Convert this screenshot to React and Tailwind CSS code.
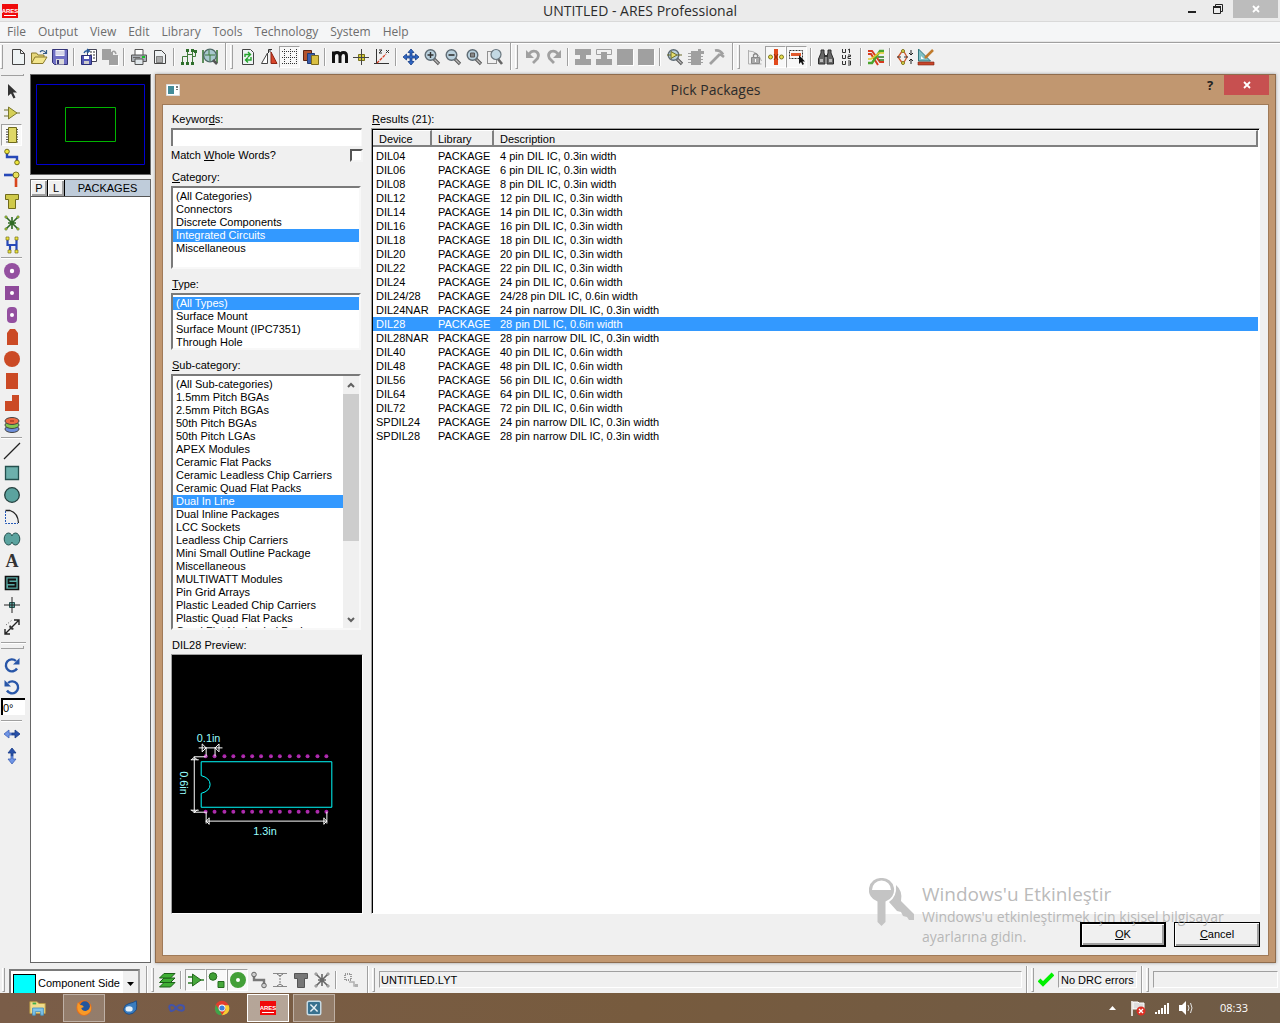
import React, { useState } from "react";

const menus = ["File", "Output", "View", "Edit", "Library", "Tools", "Technology", "System", "Help"];

const topBands = [
  ["new", "open", "save", "|", "importRegion", "exportRegion", "|", "print", "printArea", "|", "netlist", "netSearch"],
  ["redraw", "flip", "grid*", "layersSet", "|", "metric", "origin", "polar", "|", "pan", "zoomIn", "zoomOut", "zoomAll", "zoomArea"],
  ["undo", "redo", "|", "blockCopy", "blockMove", "block", "block", "|", "pick", "makePackage", "decompose"],
  ["lock", "trackAngle*", "select*", "|", "find", "annotate", "|", "router", "|", "drc", "design"],
];

const sideTools = [
  ["cursor", "gate", "chip*", "track", "via", "zone", "rats", "connectivity"],
  ["padRound", "padSquare", "padDil", "padEdge", "padCircle", "padRect", "padPoly", "padStack"],
  ["line", "box", "circle", "arc", "path", "text", "symbol", "marker", "dimension"],
];

const filterTools = ["layerStack", "|", "gateGreen*", "shapes*", "ringGreen*", "trackGrey", "viaGrey", "zoneGrey", "ratsGrey", "|", "partial"];

const categories = [
  "(All Categories)",
  "Connectors",
  "Discrete Components",
  "Integrated Circuits",
  "Miscellaneous",
];

const types = ["(All Types)", "Surface Mount", "Surface Mount (IPC7351)", "Through Hole"];

const subCategories = [
  "(All Sub-categories)",
  "1.5mm Pitch BGAs",
  "2.5mm Pitch BGAs",
  "50th Pitch BGAs",
  "50th Pitch LGAs",
  "APEX Modules",
  "Ceramic Flat Packs",
  "Ceramic Leadless Chip Carriers",
  "Ceramic Quad Flat Packs",
  "Dual In Line",
  "Dual Inline Packages",
  "LCC Sockets",
  "Leadless Chip Carriers",
  "Mini Small Outline Package",
  "Miscellaneous",
  "MULTIWATT Modules",
  "Pin Grid Arrays",
  "Plastic Leaded Chip Carriers",
  "Plastic Quad Flat Packs",
  "Quad Flat No-leaded Packages",
];

const results = [
  ["DIL04", "4 pin DIL IC, 0.3in width"],
  ["DIL06", "6 pin DIL IC, 0.3in width"],
  ["DIL08", "8 pin DIL IC, 0.3in width"],
  ["DIL12", "12 pin DIL IC, 0.3in width"],
  ["DIL14", "14 pin DIL IC, 0.3in width"],
  ["DIL16", "16 pin DIL IC, 0.3in width"],
  ["DIL18", "18 pin DIL IC, 0.3in width"],
  ["DIL20", "20 pin DIL IC, 0.3in width"],
  ["DIL22", "22 pin DIL IC, 0.3in width"],
  ["DIL24", "24 pin DIL IC, 0.6in width"],
  ["DIL24/28", "24/28 pin DIL IC, 0.6in width"],
  ["DIL24NAR", "24 pin narrow DIL IC, 0.3in width"],
  ["DIL28", "28 pin DIL IC, 0.6in width"],
  ["DIL28NAR", "28 pin narrow DIL IC, 0.3in width"],
  ["DIL40", "40 pin DIL IC, 0.6in width"],
  ["DIL48", "48 pin DIL IC, 0.6in width"],
  ["DIL56", "56 pin DIL IC, 0.6in width"],
  ["DIL64", "64 pin DIL IC, 0.6in width"],
  ["DIL72", "72 pin DIL IC, 0.6in width"],
  ["SPDIL24", "24 pin narrow DIL IC, 0.3in width"],
  ["SPDIL28", "28 pin narrow DIL IC, 0.3in width"],
];

const lens = (mark) => (
  <>
    <path d="M11 11l5 5" stroke="#555" strokeWidth="3.2" />
    <path d="M11.5 11.5l4 4" stroke="#bbb" strokeWidth="1.2" />
    <circle cx="7.5" cy="7" r="5.3" fill="#b9d0dd" stroke="#5f6c75" strokeWidth="1.4" />
    {mark}
  </>
);

const track = (line, dot, edge) => (
  <>
    <path d="M4 4v5h10v6" fill="none" stroke={line} strokeWidth="2.4" />
    <circle cx="4" cy="3.5" r="2.3" fill={dot} stroke={edge} />
    <circle cx="14" cy="14.5" r="2.3" fill={dot} stroke={edge} />
  </>
);

const rats = (line, dot) => (
  <>
    <path d="M3 3l12 12M15 3L3 15M9 3v12M5 9h8" stroke={line} strokeWidth="1.6" />
    <path d="M2 2h2v2h-2zM14 2h2v2h-2zM2 14h2v2h-2zM14 14h2v2h-2z" fill={dot} stroke={line} strokeWidth=".6" />
  </>
);

const tee = (fill, edge) => <path d="M2.5 2.5h13v5h-3v9h-7v-9h-3z" fill={fill} stroke={edge} />;

// All drawings share an 18 x 18 box
const icons = {
  new: <path d="M3.5 1.5h8l4 4v11h-12zM11.500 1.500v4h4" fill="#eef3f4" stroke="#444" />,
  open: (
    <>
      <path d="M1.5 15V5h5l1.5 2h6v3" fill="#e7d87c" stroke="#8a7a2c" />
      <path d="M1.5 15.500L5 9h12l-4 6.500z" fill="#f2e58c" stroke="#8a7a2c" />
      <path d="M10 4q3-3 6 1M16.5 2v3.500h-3.500" fill="none" stroke="#345c88" strokeWidth="1.2" />
    </>
  ),
  save: (
    <>
      <path d="M1.5 1.500h15v15h-13l-2-2z" fill="#6f6fc4" stroke="#343478" />
      <path d="M4.500 2h9v6h-9z" fill="#f4f4fb" />
      <path d="M5 11h8v5.500H5z" fill="#d9d9d9" />
      <path d="M6 12h2v4h-2z" fill="#343478" />
      <path d="M5 4h8M5 6h8" stroke="#b6b6d6" />
    </>
  ),
  importRegion: (
    <>
      <path d="M7.500 1.500h9v12h-9z" fill="#fff" stroke="#445" />
      <path d="M10 4h5M10 7h5M10 10h5" stroke="#777" strokeWidth="1.5" strokeDasharray="2 1" />
      <path d="M1.500 7.500h10v9h-10z" fill="#5257b5" stroke="#2a2e78" />
      <path d="M4 8h5v3H4z" fill="#fff" />
      <path d="M4 13h5v3H4z" fill="#ccc" />
      <path d="M4 5q1-3 5-2M7 1l2.500 2L7 5" fill="none" stroke="#275a9c" strokeWidth="1.3" />
    </>
  ),
  exportRegion: (
    <>
      <path d="M1 1h9v3h2v3h5v10H8v-5H1z" fill="#a0a0a0" />
      <path d="M11 4q3-2 4 2" fill="none" stroke="#a0a0a0" strokeWidth="1.5" />
      <path d="M17.500 8v9.500H9" fill="none" stroke="#fff" />
    </>
  ),
  print: (
    <>
      <path d="M5 7V1.500h8V7" fill="#fff" stroke="#555" />
      <path d="M1.500 7h15v6.500h-15z" fill="#a9adb2" stroke="#555" />
      <path d="M5 11h8v5.500H5z" fill="#dfe6ea" stroke="#555" />
      <path d="M12 8h3v2h-3z" fill="#15c02a" />
      <path d="M3 9.500h7" stroke="#666" />
    </>
  ),
  printArea: (
    <>
      <path d="M3.500 2.500h7l4 4v9h-11z" fill="#eef1f2" stroke="#444" />
      <path d="M5.500 8.500h6v6h-6z" fill="#aaa" stroke="#333" strokeDasharray="1 1" />
    </>
  ),
  netlist: (
    <>
      <path d="M2.500 15V8.500h5M7.500 2v14M7.500 6.500h5M12.500 2v14M12.500 8.500h3V3" fill="none" stroke="#3f7a3a" />
      <path d="M1 14h3v3H1zM6 1h3v3H6zM11 1h3v3h-3zM6 14h3v3H6zM11 14h3v3h-3zM14 2h3v3h-3z" fill="#2f6f2c" />
    </>
  ),
  netSearch: (
    <>
      <path d="M2 2v13M16 2v13" stroke="#2f6f2c" strokeWidth="1.5" />
      <circle cx="9" cy="7.500" r="6.3" fill="#a9c9cf" stroke="#4f6a66" strokeWidth="1.3" />
      <path d="M4 7h4V2M8 7h6M9 7v6" fill="none" stroke="#3f7a3a" />
      <path d="M12 12l4 4" stroke="#555" strokeWidth="2.5" />
    </>
  ),
  redraw: (
    <>
      <path d="M3.500 1.500h8l3 3v12h-11z" fill="#eef3f4" stroke="#444" />
      <path d="M6 9V6.500h5M9 4l2.500 2.500L9 9M12 9v3H7M9 9.500L6.500 12 9 14.500" fill="none" stroke="#25a52c" strokeWidth="1.4" />
    </>
  ),
  flip: (
    <>
      <path d="M1.500 15.500h6V5z" fill="#fff" stroke="#444" />
      <path d="M11 4v11.500h6z" fill="#d8452a" stroke="#8e2412" />
      <path d="M8.500 5V1.500H12M8.500 3H11" fill="none" stroke="#333" />
    </>
  ),
  grid: <path d="M1 3.500h16M1 9.500h16M1 15.500h16M3.500 1v16M9.500 1v16M15.500 1v16" stroke="#333" strokeDasharray="1 1" />,
  layersSet: (
    <>
      <path d="M1.500 2.500h8v10h-8z" fill="#b4522c" stroke="#5d2412" />
      <path d="M5.500 5.500h7v10h-7z" fill="#3c5fae" stroke="#233a70" />
      <path d="M9.500 7.500h7v9h-7z" fill="#d9bf42" stroke="#7c6a1c" />
    </>
  ),
  metric: <path d="M2.500 15V3.500M2.500 7.500Q3 4.500 6 4.500T9 8v7M9 8q.5-3.500 3.500-3.500T15.500 8v7" fill="none" stroke="#111" strokeWidth="3" />,
  origin: (
    <>
      <path d="M9.500 1v16M1 9.500h16" stroke="#444" />
      <path d="M6.500 6.500h6v6h-6z" fill="#d6cd3a" stroke="#77701a" />
      <path d="M9.500 5v9M5 9.500h9" stroke="#444" />
    </>
  ),
  polar: (
    <>
      <path d="M3.500 1v15M1 15.500h15" stroke="#333" />
      <path d="M4 15L13 6" stroke="#d33a20" strokeDasharray="3 1" strokeWidth="1.3" />
      <path d="M6 2h3L6 5h3M13 2l3 3M16 2l-3 3" fill="none" stroke="#333" />
    </>
  ),
  pan: <path d="M9 1l3 3.500h-2V8h3.500V6L17 9l-3.500 3v-2H10v3.500h2L9 17l-3-3.500h2V10H4.500v2L1 9l3.500-3v2H8V4.500H6z" fill="#2f66c4" stroke="#173e86" strokeWidth=".8" />,
  zoomIn: lens(<path d="M7.500 4v6M4.500 7h6" stroke="#333" strokeWidth="1.4" />),
  zoomOut: lens(<path d="M4.500 7h6" stroke="#333" strokeWidth="1.6" />),
  zoomAll: lens(<path d="M5.500 5h4v4h-4z" fill="#888" stroke="#555" />),
  zoomArea: (
    <>
      <path d="M1.500 3.500h9v12h-9z" fill="none" stroke="#333" strokeDasharray="1 1" />
      <path d="M12 11l4 5" stroke="#666" strokeWidth="2.6" />
      <circle cx="10" cy="6.500" r="5" fill="#c3d9e4" stroke="#6b7880" strokeWidth="1.2" />
    </>
  ),
  undo: (
    <>
      <path d="M5 6q3-4 7-2.500 4 2.500 1.500 7L9 15" fill="none" stroke="#a0a0a0" strokeWidth="2.8" />
      <path d="M2 2v8h8z" fill="#a0a0a0" />
    </>
  ),
  redo: (
    <>
      <path d="M13 6Q10 2 6 3.500q-4 2.500-1.500 7L9 15" fill="none" stroke="#a0a0a0" strokeWidth="2.8" />
      <path d="M16 2v8H8z" fill="#a0a0a0" />
    </>
  ),
  blockCopy: <path d="M1 1h16v6h-5v4h5v6H1v-6h5V7H1z" fill="#a0a0a0" />,
  blockMove: (
    <>
      <path d="M1.500 1.500h15v5h-15z" fill="#f0f0f0" stroke="#a0a0a0" />
      <path d="M6 4h6v7h5v6H1v-6h5z" fill="#a0a0a0" />
    </>
  ),
  block: (
    <>
      <path d="M2 2h16v16H2z" fill="#fff" />
      <path d="M1 1h16v16H1z" fill="#a0a0a0" />
    </>
  ),
  pick: lens(<path d="M5 3.500v7L11 7zM1 7h4M11 7h5" fill="#e3dd6c" stroke="#6a6a2a" />),
  makePackage: (
    <>
      <path d="M4 3h7v-2h3v2h3v3h-3v11H4z" fill="#a0a0a0" />
      <path d="M1 5.500h15M1 8.500h15M1 11.500h15M1 14.500h15" stroke="#a0a0a0" />
    </>
  ),
  decompose: <path d="M2 16L12 6M7 2.500q5-1 8 4M12 6l4 3" fill="none" stroke="#a0a0a0" strokeWidth="2.8" />,
  lock: (
    <>
      <path d="M2.500 2v14h13M2.500 3Q12 3 15.500 13" fill="none" stroke="#b0b0b0" />
      <path d="M5.500 9.500h8v6h-8z" fill="#aaa" stroke="#888" />
      <path d="M7.500 9V7q2-2.500 4 0v2" fill="none" stroke="#888" strokeWidth="1.3" />
      <path d="M9 11h1v3h-1z" fill="#fff" />
    </>
  ),
  trackAngle: (
    <>
      <path d="M7 1h4v16H7z" fill="#e24a1c" />
      <path d="M7 6l4 6M7 12l4-6" stroke="#8e2a0c" />
      <circle cx="3.500" cy="9" r="2" fill="#e8e04a" stroke="#7d7720" />
      <circle cx="14.500" cy="9" r="2" fill="#e8e04a" stroke="#7d7720" />
    </>
  ),
  select: (
    <>
      <path d="M1.500 2.500h13v8h-13z" fill="none" stroke="#333" strokeDasharray="2 1" />
      <path d="M3 5h10v3H3z" fill="#e0582c" />
      <path d="M11 7v9l2-2 1.500 3 1.500-1-1.500-2.500H17z" fill="#111" />
    </>
  ),
  find: (
    <>
      <path d="M4 2h3v3l1 3v8H1.500v-5L4 5zM11 2h3v3l2.500 6v5H10V8l1-3z" fill="#666" stroke="#2c2c2c" />
      <path d="M3 11h3v3H3zM12 11h3v3h-3z" fill="#bbb" />
      <path d="M7 8h4" stroke="#333" strokeWidth="2" />
    </>
  ),
  annotate: (
    <path
      d="M4.500 1v3.500h3V1M10 2l1.500-1v4M4.500 7v3.500h3V7M10 7h2.500v1.500H10v2h3M4.500 13v3.500h3V13M10 13h2.500v4H10M10 15h2.500"
      fill="none"
      stroke="#333"
    />
  ),
  router: (
    <>
      <path d="M1 3h4l8 11h4M1 6h3l7 11" fill="none" stroke="#d63b1f" strokeWidth="2" />
      <path d="M1 15h4L13 3h4" fill="none" stroke="#4aa52c" strokeWidth="2.4" />
      <path d="M1 11h3l8-6h5" fill="none" stroke="#ddc92c" strokeWidth="1.6" />
      <path d="M11 9h6M12 12h5" stroke="#2a7a1c" strokeWidth="1.5" />
    </>
  ),
  drc: (
    <>
      <path d="M7 2l-5 7 5 7M7 2l4 7-4 7" fill="none" stroke="#d0582c" strokeWidth="1.3" />
      <path d="M1 9h4M8 9h4" stroke="#333" />
      <circle cx="7" cy="3" r="1.5" fill="#e8e04a" stroke="#7d7720" />
      <circle cx="7" cy="15" r="1.5" fill="#e8e04a" stroke="#7d7720" />
      <path d="M15 2v5M13 5l2 2 2-2M15 16v-5M13 13l2-2 2 2" fill="none" stroke="#222" />
    </>
  ),
  design: (
    <>
      <path d="M1.500 1v12h12z" fill="#7fc1c6" stroke="#33767c" />
      <path d="M4 8v3h3z" fill="#fff" />
      <path d="M8 10l8-8" stroke="#c07a2c" strokeWidth="2.5" />
      <path d="M1 14h16v3H1z" fill="#c8452a" stroke="#7c2412" strokeWidth=".6" />
    </>
  ),
  cursor: <path d="M5 2v12l3-2.500 2.500 5 2-1-2.500-5h4z" fill="#333" />,
  gate: (
    <>
      <path d="M1 6h5M1 12h5M13 9h4" stroke="#6f7030" />
      <path d="M5.500 3v12L14 9z" fill="#d5d057" stroke="#7d7a2c" />
    </>
  ),
  chip: (
    <>
      <path d="M3 3.500h12M3 6h12M3 8.500h12M3 11h12M3 13.500h12M3 16h12" stroke="#555" />
      <path d="M5.500 1.500h8v15h-8z" fill="#dfd866" stroke="#6f6a1c" />
    </>
  ),
  track: track("#2648b8", "#ede53c", "#76701c"),
  via: (
    <>
      <path d="M1 5h10" stroke="#2648b8" strokeWidth="2.6" />
      <path d="M13 6v11" stroke="#d8451c" strokeWidth="2.6" />
      <circle cx="13" cy="5" r="3" fill="#e8e05a" stroke="#7d7720" />
    </>
  ),
  zone: tee("#cfc94a", "#6f6a1c"),
  rats: rats("#2f6a24", "#ede53c"),
  connectivity: (
    <>
      <path d="M4.500 3v6h9M13.500 3v12M7 9v6" fill="none" stroke="#2648b8" strokeWidth="2.2" />
      <path d="M3 1h3v3h-3zM12 1h3v3h-3zM5 14h3v3h-3zM12 14h3v3h-3z" fill="#ede53c" stroke="#76701c" strokeWidth=".7" />
    </>
  ),
  padRound: (
    <>
      <circle cx="9" cy="9" r="8" fill="#9450a0" />
      <circle cx="9" cy="9" r="2.2" fill="#fff" />
    </>
  ),
  padSquare: (
    <>
      <path d="M2 2h14v14H2z" fill="#8f4a9b" />
      <circle cx="9" cy="9" r="2" fill="#fff" />
    </>
  ),
  padDil: (
    <>
      <rect x="4" y="1" width="10" height="16" rx="4" fill="#9450a0" />
      <circle cx="9" cy="9" r="2" fill="#fff" />
    </>
  ),
  padEdge: <path d="M4 17V5l3-4h5l3 4v12z" fill="#cb4a25" />,
  padCircle: <circle cx="9" cy="9" r="8" fill="#cb4a25" />,
  padRect: <path d="M3 1h12v16H3z" fill="#cb4a25" />,
  padPoly: <path d="M9 1h7v16H2V7h7z" fill="#cb4a25" />,
  padStack: (
    <>
      <ellipse cx="9" cy="13" rx="7" ry="3.5" fill="#6d8fdc" stroke="#444" />
      <ellipse cx="9" cy="9" rx="7" ry="3.5" fill="#84c850" stroke="#444" />
      <ellipse cx="9" cy="5" rx="7" ry="3.5" fill="#ef6a42" stroke="#444" />
      <path d="M7 5h4" stroke="#8e2412" />
    </>
  ),
  line: <path d="M1 17L17 1" stroke="#222" strokeWidth="1.3" />,
  box: <path d="M2.500 2.500h13v13h-13z" fill="#6cb0ac" stroke="#24504e" strokeWidth="1.3" />,
  circle: <circle cx="9" cy="9" r="7.3" fill="#5ba39f" stroke="#24403e" strokeWidth="1.3" />,
  arc: (
    <>
      <path d="M2.500 3v12.500H15" fill="none" stroke="#2458b8" strokeDasharray="2 1" />
      <path d="M2.500 2.500H7Q15 5 15.500 15" fill="none" stroke="#222" strokeWidth="1.3" />
    </>
  ),
  path: (
    <>
      <ellipse cx="5.500" cy="9" rx="4.3" ry="6" fill="#5ba39f" stroke="#24504e" />
      <ellipse cx="12.500" cy="9" rx="4.3" ry="6" fill="#5ba39f" stroke="#24504e" />
      <path d="M7 6h4v6H7z" fill="#5ba39f" />
    </>
  ),
  text: (
    <text x="9" y="15" textAnchor="middle" fontFamily="Liberation Serif, serif" fontWeight="700" fontSize="18" fill="#333">
      A
    </text>
  ),
  symbol: (
    <>
      <path d="M2.500 2.500h13v13h-13z" fill="#58aaa6" stroke="#111" strokeWidth="1.6" />
      <path d="M13 5.500H5.500V9h7v3.500H5" fill="none" stroke="#111" strokeWidth="1.8" />
    </>
  ),
  marker: (
    <>
      <path d="M9 1v16M1 9h16" stroke="#222" />
      <path d="M6.500 6.500h5v5h-5z" fill="#5ba39f" stroke="#24504e" />
      <path d="M9 6v6M6 9h6" stroke="#222" />
    </>
  ),
  dimension: (
    <>
      <path d="M2 16L16 2M16 7V2h-5M2 11v5h5" fill="none" stroke="#222" strokeWidth="1.4" />
      <path d="M7 7l4 4-2 1-3-3z" fill="#333" />
      <path d="M3 7l6-5" stroke="#555" strokeDasharray="1 2" />
    </>
  ),
  rotateCw: (
    <>
      <path d="M14 12.500A6 6 0 1 1 13 5" fill="none" stroke="#2856a8" strokeWidth="2.4" />
      <path d="M16.500 2v6.500H10z" fill="#2856a8" />
    </>
  ),
  rotateCcw: (
    <>
      <path d="M4 12.500A6 6 0 1 0 5 5" fill="none" stroke="#2856a8" strokeWidth="2.4" />
      <path d="M1.500 2v6.500H8z" fill="#2856a8" />
    </>
  ),
  mirrorX: (
    <>
      <path d="M1 9l5-4v3h3v2H6v3z" fill="#6f95e6" stroke="#3f62b8" strokeWidth=".8" />
      <path d="M17 9l-5-4v3H9v2h3v3z" fill="#2850a8" stroke="#173a86" strokeWidth=".8" />
    </>
  ),
  mirrorY: (
    <>
      <path d="M9 1l4 5h-3v3H8V6H5z" fill="#2850a8" stroke="#173a86" strokeWidth=".8" />
      <path d="M9 17l4-5h-3V9H8v3H5z" fill="#6f95e6" stroke="#3f62b8" strokeWidth=".8" />
    </>
  ),
  layerStack: (
    <g fill="#3fae34" stroke="#1c5f18">
      <path d="M6 11.500h11l-4.500 4.500H1.500z" />
      <path d="M6 7h11l-4.500 4.500H1.500z" />
      <path d="M6 2.500h11L12.500 7H1.500z" />
    </g>
  ),
  gateGreen: (
    <>
      <path d="M1 6h5M1 12h5M13 9h4" stroke="#2a7a24" strokeWidth="1.3" />
      <path d="M5.500 3v12L14 9z" fill="#46a83a" stroke="#256a1e" />
    </>
  ),
  shapes: (
    <>
      <circle cx="5" cy="5.500" r="3.8" fill="#3f9f34" stroke="#256a1e" />
      <path d="M10 10.500h6v6h-6z" fill="#46a83a" stroke="#256a1e" />
    </>
  ),
  ringGreen: <circle cx="9" cy="9" r="5" fill="#fff" stroke="#43a038" strokeWidth="6" />,
  trackGrey: track("#777", "#ccc", "#666"),
  viaGrey: (
    <>
      <path d="M2 2.500h14M2 15.500h14" stroke="#888" />
      <path d="M9 4v10" stroke="#777" strokeDasharray="2 1" />
      <path d="M6 3l3 2 3-2M6 15l3-2 3 2" fill="none" stroke="#777" />
    </>
  ),
  zoneGrey: tee("#777", "#555"),
  ratsGrey: rats("#666", "#ddd"),
  partial: (
    <>
      <path d="M3 3h6v6H3z" fill="none" stroke="#999" strokeDasharray="1 1" strokeWidth="2" />
      <path d="M7 11h5v4h3" fill="none" stroke="#b0b0b0" strokeWidth="1.5" />
      <path d="M13 13h3v3h-3z" fill="#b0b0b0" />
    </>
  ),
};

function Glyph({ name }) {
  return (
    <svg width="18" height="18" viewBox="0 0 18 18" aria-hidden="true">
      {icons[name]}
    </svg>
  );
}

function Tool({ id }) {
  const pressed = id.endsWith("*");
  const name = id.replace("*", "");
  return (
    <button
      type="button"
      aria-label={name}
      aria-pressed={pressed}
      className={`flex h-[22px] w-[21px] shrink-0 items-center justify-center border ${
        pressed ? "border-t-[#a0a0a0] border-l-[#a0a0a0] border-r-white border-b-white bg-[#f8f8f8]" : "border-transparent"
      }`}
    >
      <Glyph name={name} />
    </button>
  );
}

function Divider() {
  return (
    <div className="flex w-2 shrink-0 items-center justify-center">
      <div className="h-[18px] w-[2px] border-r border-l border-r-white border-l-[#a0a0a0]" />
    </div>
  );
}

function Grip() {
  return <div className="h-6 w-[3px] shrink-0 border-r border-b border-l border-r-[#a0a0a0] border-b-[#a0a0a0] border-l-white" />;
}

function BandEnd() {
  return <div className="w-[2px] shrink-0 self-stretch border-r border-l border-r-white border-l-[#a0a0a0]" />;
}

function ToolRow({ items }) {
  return items.map((id, i) => (id === "|" ? <Divider key={i} /> : <Tool key={i} id={id} />));
}

function AresLogo() {
  return (
    <svg width="16" height="14" viewBox="0 0 16 14" aria-hidden="true">
      <rect width="16" height="14" fill="#f00a0a" />
      <text
        x="8"
        y="9"
        textAnchor="middle"
        fontFamily="Liberation Sans Narrow, Liberation Sans, sans-serif"
        fontWeight="700"
        fontSize="6"
        fill="#fff"
      >
        ARES
      </text>
      <path d="M2 11.500h12" stroke="#fff" />
    </svg>
  );
}

function Label({ hotkey, rest, before = "", htmlFor, id }) {
  return (
    <label htmlFor={htmlFor} id={id} className="flex h-[18px] shrink-0 items-center px-px whitespace-pre">
      <span>
        {before}
        <u>{hotkey}</u>
        {rest}
      </span>
    </label>
  );
}

function ListBox({ labelId, items, initial, className, scroll }) {
  const [selected, setSelected] = useState(initial);

  return (
    <div
      className={`mr-[2px] flex shrink-0 overflow-hidden border-2 border-t-[#7a7a7a] border-l-[#7a7a7a] border-r-[#f8f8f8] border-b-[#f8f8f8] bg-white ${className}`}
    >
      <ul role="listbox" aria-labelledby={labelId} className="min-w-0 flex-1 pt-[2px]">
        {items.map((item, i) => (
          <li
            key={item}
            role="option"
            aria-selected={i === selected}
            onClick={() => setSelected(i)}
            className={`h-[13px] pl-[3px] leading-[13px] whitespace-nowrap ${
              i === selected ? "bg-[#3399ff] text-white" : ""
            }`}
          >
            {item}
          </li>
        ))}
      </ul>
      {scroll && (
        <div className="flex w-4 shrink-0 flex-col bg-[#f0f0f0] text-[#606060]">
          <button type="button" aria-label="Scroll up" className="flex h-[18px] items-center justify-center">
            <svg width="8" height="6" viewBox="0 0 8 6">
              <path d="M1 5l3-3 3 3" fill="none" stroke="currentColor" strokeWidth="2" />
            </svg>
          </button>
          <div className="h-[147px] bg-[#cdcdcd]" />
          <button type="button" aria-label="Scroll down" className="mt-auto flex h-[17px] items-center justify-center">
            <svg width="8" height="6" viewBox="0 0 8 6">
              <path d="M1 1l3 3 3-3" fill="none" stroke="currentColor" strokeWidth="2" />
            </svg>
          </button>
        </div>
      )}
    </div>
  );
}

function PackagePreview() {
  const pins = Array.from({ length: 14 }, (_, i) => Math.round(35 + i * 9.4));
  return (
    <svg width="192" height="258" viewBox="1 0 192 258" role="img" aria-label="DIL28 package outline">
      <path d="M30.500 120.500V106.500H162.500V152.500H30.500V138.500Q39.500 136 39.500 129.500T30.500 120.500" fill="none" stroke="#00ffff" />
      {pins.map((x) => (
        <g key={x} fill="#b020b0">
          <circle cx={x} cy="101" r="2" />
          <circle cx={x} cy="157" r="2" />
          <path d={`M${x} 101h1v1h-1zM${x} 157h1v1h-1z`} fill="#888" />
        </g>
      ))}
      <g fill="none" stroke="#fff">
        <path d="M23.500 102v56M23 101.500h12M23 157.500h12M20 104.500h8M23.500 102l-3 2.500M23.500 102l3 2.500M20 155.500h8M23.500 158l-3-3M23.500 158l3-3" />
        <path d="M35.500 157v12M157.500 157v12M35 166.500h122M38.500 163v7M35.500 166.500l3-3M35.500 166.500l3 3M154.500 163v7M157.500 166.500l-3-3M157.500 166.500l-3 3" />
        <path d="M28 92.500h24M35.500 92v9M44.500 92v9M35.500 92.500l-4-4v8zM44.500 92.500l4-4v8z" />
      </g>
      <g fill="#9ff" fontFamily="Liberation Sans, sans-serif" fontSize="11" textAnchor="middle">
        <text x="38" y="87">0.1in</text>
        <text x="95" y="181">1.3in</text>
        <text transform="translate(9 128) rotate(90)">0.6in</text>
      </g>
    </svg>
  );
}

function ResultsTable() {
  const [selected, setSelected] = useState("DIL28");
  const headCell =
    "h-[17px] border-t border-r-2 border-b-2 border-t-white border-r-[#808080] border-b-[#808080] bg-[#f0f0f0] pl-[6px] text-left leading-4";

  return (
    <div className="flex-1 border border-t-[#a0a0a0] border-l-[#a0a0a0] border-r-white border-b-white bg-white pt-px pr-px pl-px shadow-[inset_1px_1px_0_#000]">
      <table aria-labelledby="results-label" className="w-full table-fixed border-separate border-spacing-0">
        <thead>
          <tr>
            <th className="w-[59px] p-0 pb-[2px] font-normal">
              <div className={headCell}>Device</div>
            </th>
            <th className="w-[62px] p-0 pb-[2px] font-normal">
              <div className={headCell}>Library</div>
            </th>
            <th className="p-0 pb-[2px] font-normal">
              <div className={headCell}>Description</div>
            </th>
          </tr>
        </thead>
        <tbody>
          {results.map(([device, description]) => (
            <tr
              key={device}
              onClick={() => setSelected(device)}
              className={device === selected ? "bg-[#3399ff] text-white" : ""}
            >
              <td className="h-[14px] p-0 pl-[3px] leading-[14px] whitespace-nowrap">{device}</td>
              <td className="h-[14px] p-0 pl-[6px] leading-[14px]">PACKAGE</td>
              <td className="h-[14px] p-0 pl-[6px] leading-[14px]">{description}</td>
            </tr>
          ))}
        </tbody>
      </table>
    </div>
  );
}

function ActivationNotice() {
  return (
    <div className="pointer-events-none absolute right-[36px] bottom-2 flex gap-[7px] font-['Open_Sans',sans-serif] text-[#a8a8a8]/80">
      <svg width="46" height="50" viewBox="0 0 46 50" className="shrink-0 text-[#c4c4c4]" aria-hidden="true">
        <path
          fillRule="evenodd"
          d="M12.500 0a12 12 0 0 1 4 23.500V44l-4 4-4-4V23.500A12 12 0 0 1 12.500 0zM12.500 2.500a9.500 9.500 0 0 0-9.500 9.500h19a9.500 9.500 0 0 0-9.500-9.500z"
          fill="currentColor"
        />
        <path d="M27 7q7 6 5 16l13 13v6h-5l-2-3-4-1-2-4-4-1-8-9q8-5 7-17z" fill="currentColor" />
      </svg>
      <div className="w-[310px]">
        <p className="h-7 text-[19px] leading-8">Windows&apos;u Etkinleştir</p>
        <p className="pt-[1px] text-[14px] leading-5">
          Windows&apos;u etkinleştirmek için kişisel bilgisayar
          <br />
          ayarlarına gidin.
        </p>
      </div>
    </div>
  );
}

function PickPackagesDialog() {
  const button =
    "h-[25px] w-[86px] border-black bg-[#f0f0f0] shadow-[inset_1px_1px_0_#fff,inset_-2px_-2px_0_#a0a0a0]";

  return (
    <section
      role="dialog"
      aria-labelledby="dialog-title"
      className="flex min-w-0 flex-1 flex-col border border-[#8f6c4d] bg-[#c19770] px-[6px] pb-[6px] shadow-[0_0_3px_#999]"
    >
      <header className="grid h-[29px] grid-cols-[1fr_auto_1fr] items-center font-['Open_Sans',sans-serif]">
        <svg width="14" height="12" viewBox="0 0 14 12" className="ml-1" aria-hidden="true">
          <path d="M.5.500h13v11H.5z" fill="#fff" stroke="#ddd" />
          <path d="M2 2h6v8H2z" fill="#438c99" />
          <path d="M10 2h2v2h-2zM10 5h2v1h-2z" fill="#777" />
        </svg>
        <h1 id="dialog-title" className="text-[14px] text-[#2b2b2b]">
          Pick Packages
        </h1>
        <div className="flex items-center justify-end self-start">
          <button type="button" aria-label="Help" className="h-5 w-7 text-[13px] leading-5 font-bold text-[#222]">
            ?
          </button>
          <button type="button" aria-label="Close dialog" className="flex h-5 w-[45px] items-center justify-center bg-[#c75050]">
            <svg width="8" height="8" viewBox="0 0 8 8">
              <path d="M1 1l6 6M7 1L1 7" stroke="#fff" strokeWidth="1.8" />
            </svg>
          </button>
        </div>
      </header>

      <div className="relative flex flex-1 flex-col border border-[#a07a58] bg-[#f0f0f0] px-2 pt-[5px] pb-2">
        <div className="flex flex-1 gap-2">
          <div className="flex w-[192px] shrink-0 flex-col">
            <Label before="Keywor" hotkey="d" rest="s:" htmlFor="keywords" />
            <input
              id="keywords"
              className="mr-px h-[18px] w-[191px] border-t-2 border-r border-l-2 border-t-[#7a7a7a] border-r-[#f8f8f8] border-l-[#7a7a7a] bg-white px-1 outline-none"
            />
            <div className="flex h-[18px] items-center justify-between">
              <label htmlFor="whole-words">
                Match <u>W</u>hole Words?
              </label>
              <input
                id="whole-words"
                type="checkbox"
                className="h-[13px] w-[13px] appearance-none border-2 border-t-[#555] border-r-[#f4f4f4] border-b-[#f4f4f4] border-l-[#555] bg-white checked:bg-[#555]"
              />
            </div>

            <div className="mt-1 flex flex-col">
              <Label hotkey="C" rest="ategory:" id="category-label" />
              <ListBox labelId="category-label" items={categories} initial={3} className="h-[83px]" />
            </div>
            <div className="mt-1.5 flex flex-col">
              <Label hotkey="T" rest="ype:" id="type-label" />
              <ListBox labelId="type-label" items={types} initial={0} className="h-[57px]" />
            </div>
            <div className="mt-1.5 flex flex-col">
              <Label hotkey="S" rest="ub-category:" id="sub-label" />
              <ListBox labelId="sub-label" items={subCategories} initial={9} className="h-[256px]" scroll />
            </div>

            <p className="mt-1.5 h-[18px] shrink-0 px-px leading-[18px]">DIL28 Preview:</p>
            <div className="flex flex-1 items-center justify-center border border-t-[#a0a0a0] border-r-white border-b-white border-l-[#a0a0a0] bg-black">
              <PackagePreview />
            </div>
          </div>

          <div className="flex min-w-0 flex-1 flex-col">
            <Label hotkey="R" rest="esults (21):" id="results-label" />
            <ResultsTable />
          </div>
        </div>

        <ActivationNotice />
        <footer className="flex justify-end gap-2 pt-2">
          <button type="button" className={`border-2 ${button}`}>
            <u>O</u>K
          </button>
          <button type="button" className={`border ${button}`}>
            <u>C</u>ancel
          </button>
        </footer>
      </div>
    </section>
  );
}

function SideDivider() {
  return <div className="my-[1px] h-[2px] w-[21px] border-t border-b border-t-[#a0a0a0] border-b-white" />;
}

function SideToolbar() {
  return (
    <nav aria-label="Modes" className="flex w-[30px] shrink-0 flex-col items-start pl-px">
      <div className="mb-[4px] h-[2px] w-[23px] border-r border-b border-[#a0a0a0]" />
      {sideTools.map((group, i) => (
        <React.Fragment key={i}>
          {i > 0 && <SideDivider />}
          {group.map((id) => (
            <Tool key={id} id={id} />
          ))}
        </React.Fragment>
      ))}
      <div className="mt-[4px] h-[2px] w-[25px] border-t border-b border-t-[#a0a0a0] border-b-white" />
      <div className="mt-[2px] mb-[5px] h-[3px] w-[23px] border-r border-b border-[#a0a0a0]" />
      <Tool id="rotateCw" />
      <Tool id="rotateCcw" />
      <input
        aria-label="Rotation angle"
        defaultValue="0°"
        className="mb-1 h-[17px] w-[24px] border-t-2 border-l-2 border-t-black border-l-black bg-white outline-none"
      />
      <SideDivider />
      <Tool id="mirrorX" />
      <Tool id="mirrorY" />
    </nav>
  );
}

function ObjectPanel() {
  const button = "w-[17px] border-r border-black bg-[#f0f0f0] shadow-[inset_1px_1px_0_#fff,inset_-2px_-2px_0_#a0a0a0]";
  return (
    <aside className="flex w-[121px] shrink-0 flex-col gap-1">
      <div className="border border-[#666] bg-black">
        <svg width="119" height="99" viewBox="0 0 119 99" aria-hidden="true">
          <path d="M5.500 9.500h108v80h-108z" fill="none" stroke="#0000d0" />
          <path d="M34.500 32.500h50v34h-50z" fill="none" stroke="#00b400" />
        </svg>
      </div>
      <div className="flex flex-1 flex-col border border-[#666] bg-white">
        <div className="flex h-[17px] border-b border-[#555] bg-[#bfccda]">
          <button type="button" className={button}>
            P
          </button>
          <button type="button" className={button}>
            L
          </button>
          <span className="flex-1 text-center leading-4">PACKAGES</span>
        </div>
      </div>
    </aside>
  );
}

function StatusBar() {
  const field = "h-[17px] border border-t-[#a0a0a0] border-r-white border-b-white border-l-[#a0a0a0] leading-4";
  return (
    <div className="flex h-[27px] items-center">
      <div className="flex items-center self-stretch pl-[2px]">
        <Grip />
      </div>
      <div className="mt-[3px] ml-[4px] flex h-6 w-[131px] items-end self-start border-t-2 border-r-2 border-l-2 border-t-[#7a7a7a] border-r-[#a0a0a0] border-l-[#7a7a7a] bg-white">
        <div className="ml-[2px] h-[19px] w-[23px] shrink-0 border border-b-0 border-black bg-[#00ffff]" />
        <select
          aria-label="Current layer"
          className="h-5 min-w-0 flex-1 appearance-none bg-transparent pl-[2px] outline-none"
          defaultValue="Component Side"
        >
          <option>Component Side</option>
          <option>Solder Side</option>
        </select>
        <div className="flex h-full w-4 shrink-0 items-center justify-center border-l border-white bg-[#f0f0f0] pt-[3px]">
          <svg width="7" height="4" viewBox="0 0 7 4">
            <path d="M0 0h7L3.500 4z" fill="#000" />
          </svg>
        </div>
      </div>
      <div className="flex items-center gap-[3px] self-stretch pl-[6px]">
        <BandEnd />
        <Grip />
      </div>
      <div className="flex pl-[2px]">
        <ToolRow items={filterTools} />
      </div>
      <div className="flex items-center gap-[3px] self-stretch pl-[6px]">
        <BandEnd />
        <Grip />
      </div>
      <div className={`ml-1 flex-1 pl-px ${field}`}>UNTITLED.LYT</div>
      <div className="flex items-center gap-[3px] self-stretch pl-1">
        <BandEnd />
        <Grip />
      </div>
      <svg width="16" height="15" viewBox="0 0 16 15" className="mx-1" aria-hidden="true">
        <path d="M1 8l4 4L15 2" fill="none" stroke="#00f000" strokeWidth="4" />
      </svg>
      <div className={`w-[79px] pl-[2px] whitespace-nowrap ${field}`}>No DRC errors</div>
      <div className="flex items-center gap-[3px] self-stretch pl-1">
        <BandEnd />
        <Grip />
      </div>
      <div className={`mr-[2px] ml-1 w-[125px] ${field}`} />
    </div>
  );
}

const taskIcons = {
  explorer: (
    <>
      <path d="M1 3h8l2 2h7v11H1z" fill="#f2dc8a" stroke="#b99b45" />
      <path d="M4 18V10h12v8h-3v-4H7v4z" fill="#7fc4ea" stroke="#4a93c0" />
      <path d="M4 5h4" stroke="#3cae4c" strokeWidth="2" />
    </>
  ),
  firefox: (
    <>
      <circle cx="10" cy="10" r="8.5" fill="#e8701a" />
      <circle cx="11" cy="8" r="5.5" fill="#24569c" />
      <path d="M3 4q2 3 5 3l2 2-3 1q1 4 6 3 4-1 4-6 2 5-1 8-4 4-9 2-6-3-4-13z" fill="#f79a28" />
    </>
  ),
  drop: (
    <>
      <path d="M17 2q1 6 0 10-3 5-8 5-6-1-6-6 1-5 6-6 5-1 8-3z" fill="#3a7dc0" stroke="#1b4a82" />
      <ellipse cx="9" cy="11" rx="4" ry="3" fill="#e2f0fa" />
    </>
  ),
  loop: (
    <path
      d="M10 10Q7 6 4 7t0 6q3 1 6-3t6-3q3 0 3 3t-3 3q-3 0-6-3z"
      fill="none"
      stroke="#4353a8"
      strokeWidth="2.2"
    />
  ),
  chrome: (
    <>
      <circle cx="10" cy="10" r="8" fill="#e23d2e" />
      <path d="M3 6l5 8 2 4q-7 0-8-7z" fill="#3fa64a" />
      <path d="M10 18l4-6-1-5h4.500q2 6-2 9-3 2-5.500 2z" fill="#f6cf32" />
      <circle cx="10" cy="10" r="3.8" fill="#fff" />
      <circle cx="10" cy="10" r="2.9" fill="#3f7fd8" />
    </>
  ),
  tools: (
    <>
      <rect x="2.500" y="2.500" width="15" height="15" rx="2" fill="#38718f" stroke="#c8dce6" strokeWidth="1.6" />
      <path d="M6 6l8 8M13 6l-3 4-4 4" stroke="#e8f1f5" strokeWidth="1.6" />
    </>
  ),
};

function Taskbar() {
  const tasks = [
    ["explorer", "border-transparent"],
    ["firefox", "border-white/40 bg-white/20"],
    ["drop", "border-transparent"],
    ["loop", "border-transparent"],
    ["chrome", "border-transparent"],
    ["ares", "border-white bg-white/45"],
    ["tools", "border-white/40 bg-white/20"],
  ];
  return (
    <footer className="flex h-[30px] items-center bg-linear-to-r from-[#7a5d48] via-[#775b3e] to-[#6f5b46] pr-8 pl-[17px]">
      <div className="flex gap-1">
        {tasks.map(([name, look]) => (
          <button key={name} type="button" aria-label={name} className={`flex h-7 w-[42px] items-center justify-center border ${look}`}>
            {name === "ares" ? (
              <AresLogo />
            ) : (
              <svg width="18" height="18" viewBox="0 0 20 20" aria-hidden="true">
                {taskIcons[name]}
              </svg>
            )}
          </button>
        ))}
      </div>
      <div className="ml-auto flex items-center text-white">
        <svg width="7" height="4" viewBox="0 0 7 4" className="mr-[14px]" aria-hidden="true">
          <path d="M3.500 0L7 4H0z" fill="#fff" />
        </svg>
        <svg width="16" height="16" viewBox="0 0 16 16" className="mr-2" aria-hidden="true">
          <path d="M2 1v15" stroke="#fff" strokeWidth="1.5" />
          <path d="M3 2h5l1 1h5v7H8L7 9H3z" fill="#ddd" stroke="#fff" />
          <circle cx="11" cy="11" r="4.5" fill="#dc2f23" />
          <path d="M9 9l4 4M13 9l-4 4" stroke="#fff" strokeWidth="1.3" />
        </svg>
        <svg width="16" height="13" viewBox="0 0 16 13" className="mr-2" aria-hidden="true">
          <path d="M1 10h2v2H1zM4 8h2v4H4zM7 6h2v6H7zM10 3h2v9h-2zM13 1h2v11h-2z" fill="#fff" />
        </svg>
        <svg width="16" height="14" viewBox="0 0 16 14" className="mr-[26px]" aria-hidden="true">
          <path d="M1 4h3l4-4v14l-4-4H1z" fill="#fff" />
          <path d="M10 4q2 3 0 6M12.500 2q3 5 0 10" fill="none" stroke="#e5e5e5" />
        </svg>
        <time className="font-['Open_Sans',sans-serif] text-[11px]">08:33</time>
      </div>
    </footer>
  );
}

export default function App() {
  return (
    <div className="flex min-h-screen flex-col bg-[#f0f0f0] font-['Liberation_Sans',sans-serif] text-[11px] text-black">
      <header className="grid h-[22px] grid-cols-[1fr_auto_1fr] items-center border-b border-[#d9d9d9] bg-[#ebebeb] px-[2px] font-['Open_Sans',sans-serif]">
        <AresLogo />
        <span className="text-[14px] leading-5 text-[#2b2b2b]">UNTITLED - ARES Professional</span>
        <div className="flex h-[18px] items-center justify-end self-start">
          <button type="button" aria-label="Minimize" className="flex h-[18px] w-[26px] items-center justify-center">
            <svg width="8" height="8" viewBox="0 0 8 8">
              <path d="M0 6h8v2H0z" fill="#222" />
            </svg>
          </button>
          <button type="button" aria-label="Restore" className="flex h-[18px] w-[26px] items-center justify-center">
            <svg width="10" height="10" viewBox="0 0 10 10">
              <path d="M2.500 2V.500h7v7H8" fill="none" stroke="#222" />
              <path d="M.5 3h7v6.500h-7z" fill="none" stroke="#222" />
              <path d="M0 3h8" stroke="#222" strokeWidth="2" />
            </svg>
          </button>
          <button type="button" aria-label="Close" className="ml-[2px] flex h-[18px] w-[45px] items-center justify-center bg-[#bcbcbc]">
            <svg width="8" height="8" viewBox="0 0 8 8">
              <path d="M1 1l6 6M7 1L1 7" stroke="#fff" strokeWidth="1.8" />
            </svg>
          </button>
        </div>
      </header>

      <nav className="flex h-5 items-center gap-3 border-b border-[#e6e6e6] bg-[#f5f6f7] pl-[7px] font-['Open_Sans',sans-serif] text-[12px] text-[#6d6d6d]">
        {menus.map((menu) => (
          <button key={menu} type="button">
            {menu}
          </button>
        ))}
      </nav>

      <div className="flex h-8 items-center border-t border-[#a0a0a0] pb-1 shadow-[inset_0_1px_0_#fff]">
        {topBands.map((band, i) => (
          <React.Fragment key={i}>
            <Grip />
            <div className="flex pr-[5px] pl-[4px]">
              <ToolRow items={band} />
            </div>
            {i < 3 && <BandEnd />}
            {i < 3 && <div className="w-[3px]" />}
          </React.Fragment>
        ))}
      </div>

      <main className="flex flex-1 pr-1 pb-[3px]">
        <SideToolbar />
        <ObjectPanel />
        <div className="w-1 shrink-0" />
        <PickPackagesDialog />
      </main>

      <StatusBar />
      <Taskbar />
    </div>
  );
}
